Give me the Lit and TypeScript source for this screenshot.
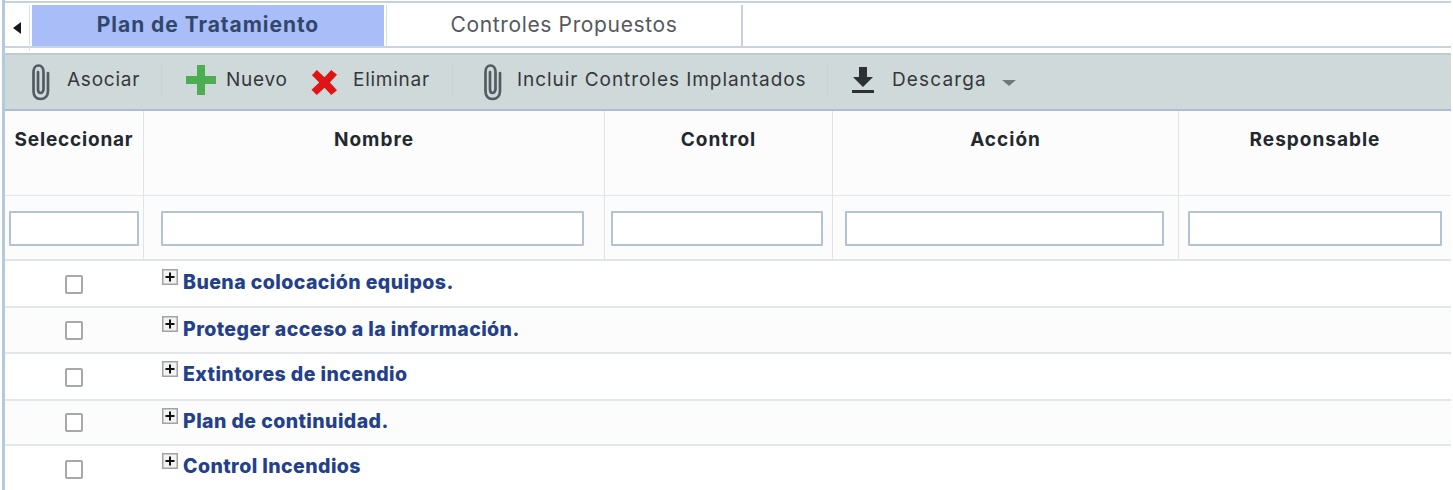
import { LitElement, html, css, svg } from "lit";
import { customElement } from "lit/decorators.js";

const clip = html`<svg class="clip" viewBox="0 0 20 38" width="20" height="38" fill="none" stroke="#525c63" stroke-width="2.700" stroke-linecap="round"><path d="M18 10 V28 C18 33 15 36 10.500 36 C6 36 3.500 33 3.500 28 V9 C3.500 5 5.500 2.500 8.500 2.500 C11.500 2.500 13.500 5 13.500 9 V26 C13.500 28.500 12 30 10.500 30 C9 30 8 28.500 8 26 V9"/></svg>`;

const cols = ["Seleccionar", "Nombre", "Control", "Acción", "Responsable"];
const rows = [
  "Buena colocación equipos.",
  "Proteger acceso a la información.",
  "Extintores de incendio",
  "Plan de continuidad.",
  "Control Incendios",
];

@customElement("app-root")
export class AppRoot extends LitElement {
  static styles = css`
    :host {
      display: block;
      width: 1453px;
      height: 490px;
      overflow: hidden;
      background: #fff;
      font-family: "Inter", "Open Sans", sans-serif;
      color: #2c3136;
    }
    .frame {
      margin-left: 2px;
      width: 1449px;
      height: 490px;
      border-left: 3px solid #b5c9dc;
      box-sizing: border-box;
      overflow: hidden;
    }
    .tabs {
      height: 47px;
      box-sizing: border-box;
      margin-top: 1px;
      border-top: 2px solid #c5d2dd;
      border-bottom: 2px solid #c9d5de;
      display: flex;
      padding-top: 2px;
    }
    .back {
      width: 25px;
      display: flex;
      align-items: center;
      justify-content: center;
      border-right: 1px solid #dbe3ea;
      margin-bottom: -5px;
      padding-right: 1px;
      box-sizing: border-box;
    }
    .back i {
      display: block;
      border: 6px solid transparent;
      border-left: 0;
      border-right: 8px solid #15181c;
      margin-top: -1px;
    }
    .tab {
      display: flex;
      align-items: center;
      justify-content: center;
      box-sizing: border-box;
      font-size: 21px;
      padding-bottom: 2px;
    }
    .tab.active {
      margin-left: 2px;
      width: 352px;
      background: #a9bdf9;
      color: #33466b;
      font-weight: 700;
      letter-spacing: 0.95px;
    }
    .tab.other {
      margin-left: 2px;
      width: 357px;
      border-left: 1px solid #d5dfe6;
      border-right: 2px solid #c5d2dd;
      color: #55595d;
      letter-spacing: 0.65px;
    }
    .gap { height: 5px; }
    .toolbar {
      height: 58px;
      box-sizing: border-box;
      background: #d0d9d9;
      border-top: 2px solid #bccbd6;
      border-bottom: 2px solid #a8bdd6;
      display: flex;
      align-items: center;
      padding-bottom: 4px;
      font-size: 19px;
      color: #33383b;
      letter-spacing: 0.75px;
    }
    .item { display: flex; align-items: center; white-space: nowrap; }
    .item span { position: relative; top: -1px; }
    .sep { width: 1px; height: 36px; background: #c8d2d3; }
    .clip { display: block; margin-top: 3px; }
    .t-asoc { margin-left: 25px; width: 131px; }
    .t-asoc span { margin-left: 17px; }
    .t-nuevo { margin-left: 24px; width: 127px; }
    .t-nuevo span { margin-left: 10px; }
    .t-nuevo svg { margin-top: -1px; }
    .t-elim { width: 141px; margin-left: -2px; }
    .t-elim span { margin-left: 15px; }
    .t-elim svg { margin-top: 5px; }
    .t-incl { margin-left: 29px; width: 345px; }
    .t-incl span { margin-left: 15px; letter-spacing: 0.95px; }
    .t-desc { margin-left: 23px; }
    .t-desc span { margin-left: 17px; letter-spacing: 1.15px; }
    .caret {
      margin-left: 15px;
      margin-top: 5px;
      border: 7px solid transparent;
      border-top: 6px solid #70787c;
      border-bottom: 0;
    }
    .grid {
      display: grid;
      grid-template-columns: 139px 461px 228px 346px 272px;
      background: #fcfcfc;
    }
    .head {
      height: 85px;
      border-right: 1px solid #dfe4e7;
      border-bottom: 1px solid #e3e7ea;
      box-sizing: border-box;
      text-align: center;
      font-weight: 700;
      font-size: 19px;
      line-height: 24px;
      padding-top: 17px;
      color: #23282e;
      letter-spacing: 1px;
    }
    .head.first { letter-spacing: 0.8px; }
    .filter {
      height: 65px;
      border-right: 1px solid #dfe4e7;
      border-bottom: 2px solid #e0e4e7;
      box-sizing: border-box;
      padding-top: 15px;
      display: flex;
      justify-content: center;
    }
    .head:nth-child(5), .filter:nth-child(10) { border-right: 0; }
    .filter input {
      height: 35px;
      box-sizing: border-box;
      border: 2px solid #b3c3d4;
      background: #fff;
      padding: 0;
      border-radius: 1px;
      outline: none;
    }
    .f0 input { width: 130px; margin-left: 0; }
    .f1 input { width: 423px; margin-left: -3px; }
    .f2 input { width: 212px; margin-left: -4px; }
    .f3 input { width: 319px; margin-left: -3px; }
    .f4 input { width: 254px; margin-left: -1px; }
    .row {
      display: grid;
      grid-template-columns: 137px 1fr;
      box-sizing: border-box;
      border-bottom: 2px solid #e4e7e9;
      height: 46px;
    }
    .row.odd { background: #fff; }
    .row.even { background: #fcfcfc; }
    .row.r0, .row.r2 { height: 47px; }
    .row.r3 { height: 45px; }
    .sel { display: flex; justify-content: center; padding-top: 14px; }
    .r1 .sel { padding-top: 13px; }
    .r3 .sel { padding-top: 12px; }
    .box {
      width: 18px;
      height: 19px;
      box-sizing: border-box;
      border: 2px solid #a8a8a8;
      border-radius: 2px;
      background: #fff;
    }
    .name {
      display: flex;
      padding-left: 20px;
      padding-top: 7px;
      color: #23408c;
      font-weight: 800;
      font-size: 19.5px;
      line-height: 28px;
      letter-spacing: 0.42px;
    }
    .r2 .name, .r3 .name, .r4 .name { padding-top: 6px; }
    .plus { display: block; margin-right: 5px; margin-top: 1px; flex: none; }
  `;

  render() {
    return html`<div class="frame">
      <div class="tabs">
        <div class="back"><i></i></div>
        <div class="tab active">Plan de Tratamiento</div>
        <div class="tab other">Controles Propuestos</div>
      </div>
      <div class="gap"></div>
      <div class="toolbar">
        <div class="item t-asoc">${clip}<span>Asociar</span></div>
        <div class="sep"></div>
        <div class="item t-nuevo">
          <svg width="30" height="30" viewBox="0 0 30 30"><path d="M11 0h8v11h11v8H19v11h-8V19H0v-8h11z" fill="#4cae50"/></svg>
          <span>Nuevo</span>
        </div>
        <div class="item t-elim">
          <svg width="27" height="27" viewBox="0 0 28 28"><path d="M6 1l8 7.500L21 1l6 5-7.500 8L27 22l-6 5-7-7.500-8 7.500-5.500-5.500L8.500 14 1 6.500z" fill="#e01414"/></svg>
          <span>Eliminar</span>
        </div>
        <div class="sep"></div>
        <div class="item t-incl">${clip}<span>Incluir Controles Implantados</span></div>
        <div class="sep"></div>
        <div class="item t-desc">
          <svg width="24" height="30" viewBox="0 0 24 30"><path d="M8 2h8v10h6L12 22 2 12h6z" fill="#2b3135"/><rect x="1" y="25" width="22" height="3" fill="#2b3135"/></svg>
          <span>Descarga</span>
          <i class="caret"></i>
        </div>
      </div>
      <div class="grid">
        ${cols.map((c, i) => html`<div class="head ${i === 0 ? "first" : ""}">${c}</div>`)}
        ${cols.map((_, i) => html`<div class="filter f${i}"><input type="text" /></div>`)}
      </div>
      ${rows.map(
        (r, i) => html`<div class="row r${i} ${i % 2 ? "even" : "odd"}">
          <div class="sel"><div class="box"></div></div>
          <div class="name">
            <svg class="plus" width="16" height="16" viewBox="0 0 16 16">
              <rect x="0.750" y="0.750" width="14.500" height="14.500" fill="#f2f2f2" stroke="#a3a3a3" stroke-width="1.500"/>
              ${svg`<path d="M3.500 8h9M8 3.500v9" stroke="#111" stroke-width="2"/>`}
            </svg>
            <span>${r}</span>
          </div>
        </div>`
      )}
    </div>`;
  }
}
